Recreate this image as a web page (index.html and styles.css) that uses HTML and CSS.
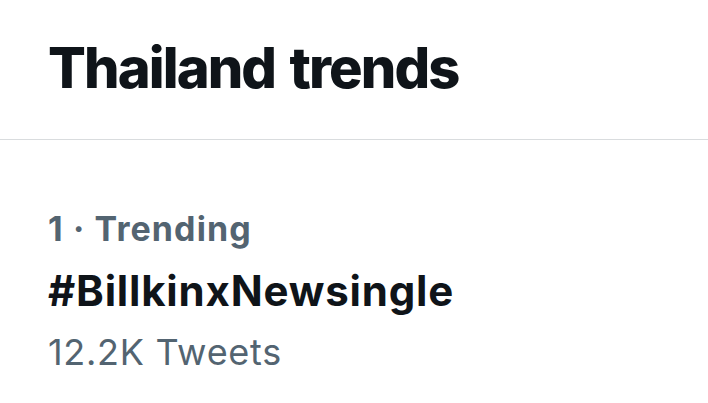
FILE: index.html
```html
<!DOCTYPE html>
<html>
<head>
<meta charset="utf-8">
<link rel="stylesheet" href="styles.css">
</head>
<body>
<div class="panel">
  <div class="header">
    <h2 class="title">Thailand trends</h2>
  </div>
  <div class="trend">
    <div class="meta">1 · Trending</div>
    <div class="tag">#BillkinxNewsingle</div>
    <div class="count">12.2K Tweets</div>
  </div>
</div>
</body>
</html>
```

FILE: styles.css
```css
html, body {
  margin: 0;
  padding: 0;
  background: #ffffff;
}
body {
  font-family: Inter, "Liberation Sans", sans-serif;
  width: 708px;
  height: 403px;
  overflow: hidden;
}
.header {
  padding: 35px 48px 37px;
  border-bottom: 1px solid #d9dcde;
}
.title {
  margin: 0;
  font-size: 56px;
  line-height: 1.2;
  font-weight: 800;
  color: #0f1419;
  letter-spacing: -1.9px;
  word-spacing: 4px;
}
.trend {
  padding: 69px 48px 0;
}
.meta {
  font-size: 34px;
  line-height: 1.2;
  font-weight: 700;
  color: #536471;
  letter-spacing: 1.1px;
}
.tag {
  margin-top: 16px;
  font-size: 42px;
  line-height: 1.2;
  font-weight: 700;
  color: #0f1419;
  letter-spacing: 0.8px;
}
.count {
  margin-top: 15px;
  font-size: 36px;
  line-height: 1.2;
  font-weight: 400;
  color: #536471;
  letter-spacing: 0.7px;
}
```
